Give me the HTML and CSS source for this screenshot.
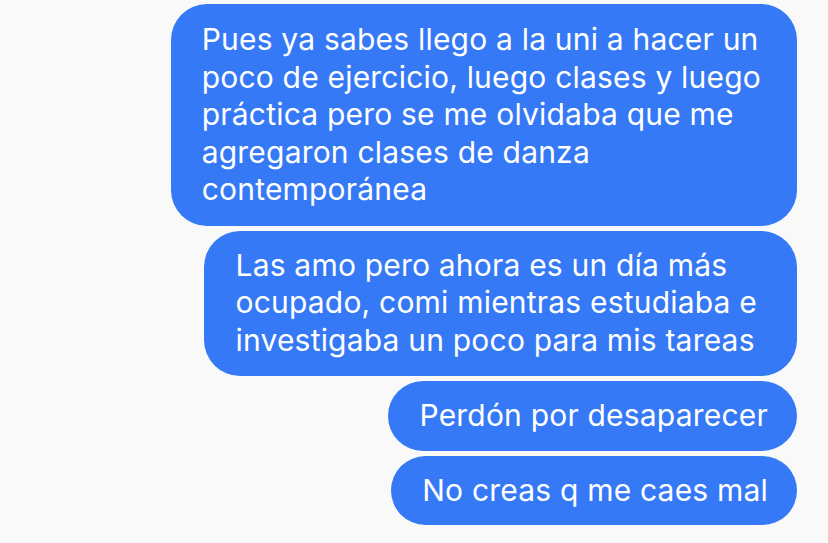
FILE: index.html
```html
<!DOCTYPE html>
<html lang="es">
<head>
  <meta charset="UTF-8">
  <meta name="viewport" content="width=device-width, initial-scale=1.0">
  <title>Mensajes</title>
  <link rel="stylesheet" href="styles.css">
</head>
<body>
  <div class="chat">
    <div class="bubble wide">Pues ya sabes llego a la uni a hacer un<br>poco de ejercicio, luego clases y luego<br>práctica pero se me olvidaba que me<br>agregaron clases de danza<br>contemporánea</div>
    <div class="bubble wider">Las amo pero ahora es un día más<br>ocupado, comi mientras estudiaba e<br>investigaba un poco para mis tareas</div>
    <div class="bubble">Perdón por desaparecer</div>
    <div class="bubble">No creas q me caes mal</div>
  </div>
</body>
</html>
```
FILE: styles.css
```css
* { margin: 0; padding: 0; box-sizing: border-box; }
body { background: #f9f9f9; font-family: 'Inter', 'Liberation Sans', sans-serif; }
.chat { display: flex; flex-direction: column; align-items: flex-end; gap: 5px; padding: 4px 31px 0 0; }
.bubble { background: #3579f6; color: #fff; font-size: 30px; line-height: 37.5px; letter-spacing: 0.2px; padding: 16px 29px 16px 31px; border-radius: 36px; white-space: nowrap; }
.bubble.wide { padding-top: 17px; padding-right: 36px; padding-bottom: 17px; }
.bubble.wider { padding-right: 40px; padding-bottom: 17px; }
```
